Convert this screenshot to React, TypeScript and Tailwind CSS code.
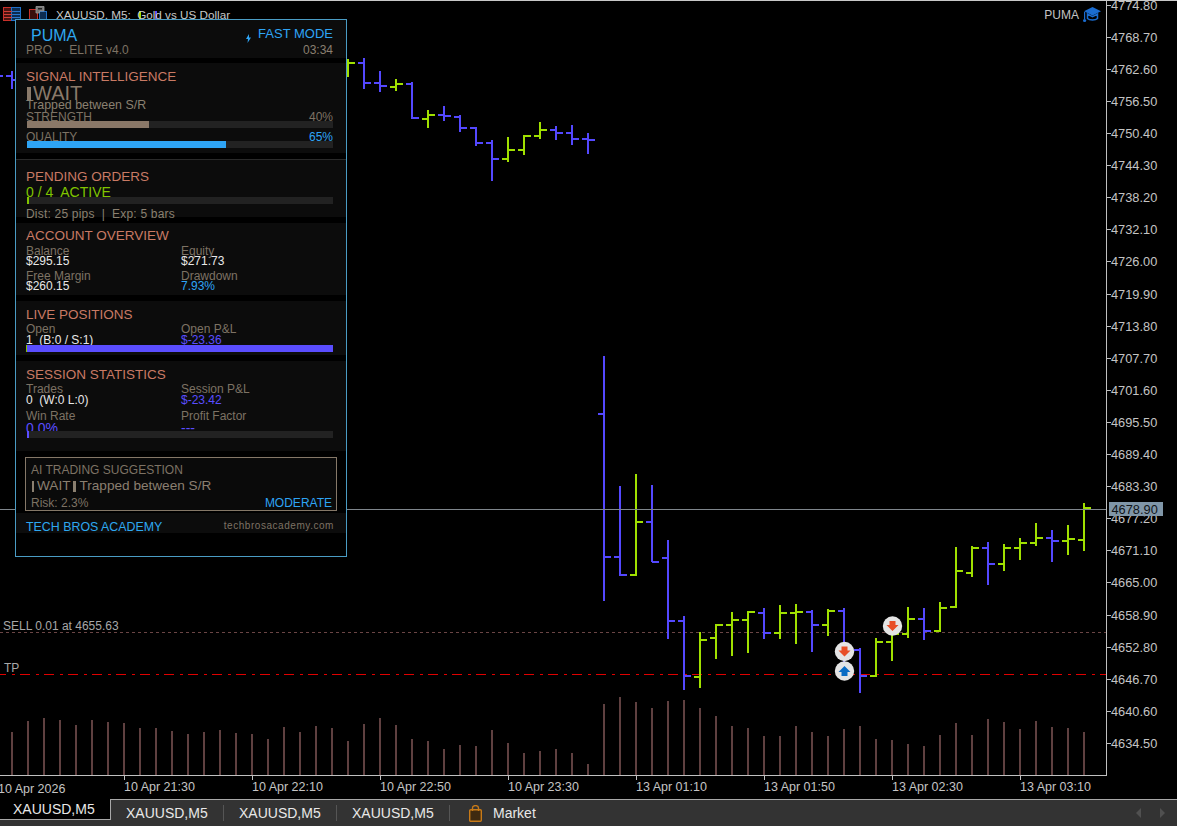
import React from "react";

type Bar = [number, number, number, number, number, "g" | "b"];

const bars: Bar[] = [
  [-4, 70, 90, 70, 76, "b"],
  [12, 71, 89, 76, 80, "b"],
  [140, 11, 40, 30, 30, "g"],
  [156, 11, 40, 30, 30, "b"],
  [348, 59, 77, 70, 63, "g"],
  [364, 58, 89, 63, 83, "b"],
  [380, 71, 92, 83, 86, "b"],
  [396, 79, 91, 87, 84, "g"],
  [412, 82, 119, 84, 118, "b"],
  [428, 110, 128, 119, 115, "g"],
  [444, 106, 121, 115, 116, "b"],
  [460, 115, 132, 117, 128, "b"],
  [476, 127, 146, 128, 143, "b"],
  [492, 140, 181, 143, 159, "b"],
  [508, 137, 162, 159, 150, "g"],
  [524, 135, 155, 150, 136, "g"],
  [540, 122, 139, 136, 130, "g"],
  [556, 126, 140, 130, 133, "b"],
  [572, 125, 145, 133, 139, "b"],
  [588, 133, 154, 139, 140, "b"],
  [604, 356, 601, 414, 557, "b"],
  [620, 486, 576, 557, 575, "b"],
  [636, 474, 576, 575, 522, "g"],
  [652, 485, 562, 522, 562, "b"],
  [668, 540, 639, 558, 621, "b"],
  [684, 616, 690, 621, 676, "b"],
  [700, 632, 688, 677, 640, "g"],
  [716, 624, 659, 638, 625, "g"],
  [732, 612, 656, 625, 620, "g"],
  [748, 611, 653, 620, 612, "g"],
  [764, 608, 639, 613, 633, "b"],
  [780, 605, 639, 633, 613, "g"],
  [796, 604, 644, 613, 612, "g"],
  [812, 610, 652, 612, 625, "b"],
  [828, 609, 636, 625, 611, "g"],
  [844, 608, 664, 611, 650, "b"],
  [860, 648, 693, 650, 676, "b"],
  [876, 638, 677, 676, 642, "g"],
  [892, 630, 661, 642, 634, "g"],
  [908, 607, 638, 634, 619, "g"],
  [924, 608, 640, 619, 631, "b"],
  [940, 602, 632, 631, 608, "g"],
  [956, 547, 608, 607, 571, "g"],
  [972, 546, 577, 573, 548, "g"],
  [988, 542, 585, 548, 564, "b"],
  [1004, 544, 571, 564, 548, "g"],
  [1020, 538, 560, 548, 543, "g"],
  [1036, 523, 546, 543, 538, "g"],
  [1052, 530, 562, 538, 541, "b"],
  [1068, 525, 555, 541, 539, "g"],
  [1084, 503, 551, 540, 508, "g"],
];

const volumes: [number, number][] = [
  [12, 732], [28, 721], [44, 718], [60, 720], [76, 725], [92, 720], [108, 722], [124, 723], [140, 728], [156, 728],
  [172, 731], [188, 734], [204, 732], [220, 730], [236, 733], [252, 734], [268, 739], [284, 727], [300, 732], [316, 726],
  [332, 728], [348, 741], [364, 724], [380, 718], [396, 725], [412, 739], [428, 741], [444, 749], [460, 745], [476, 746],
  [492, 730], [508, 743], [524, 753], [540, 751], [556, 749], [572, 753], [588, 764], [604, 704], [620, 697], [636, 702],
  [652, 708], [668, 701], [684, 700], [700, 708], [716, 716], [732, 726], [748, 728], [764, 736], [780, 736], [796, 726],
  [812, 732], [828, 736], [844, 729], [860, 726], [876, 739], [892, 740], [908, 744], [924, 746], [940, 735], [956, 723],
  [972, 735], [988, 719], [1004, 722], [1020, 729], [1036, 721], [1052, 727], [1068, 728], [1084, 732],
];

const prices: [string, number][] = [
  ["4774.80", 5], ["4768.70", 37], ["4762.60", 69], ["4756.50", 101], ["4750.40", 133], ["4744.30", 165],
  ["4738.20", 197], ["4732.10", 229], ["4726.00", 261], ["4719.90", 294], ["4713.80", 326], ["4707.70", 358],
  ["4701.60", 390], ["4695.50", 422], ["4689.40", 454], ["4683.30", 486], ["4677.20", 518], ["4671.10", 550],
  ["4665.00", 582], ["4658.90", 615], ["4652.80", 647], ["4646.70", 679], ["4640.60", 711], ["4634.50", 743],
];

const times: [string, number][] = [
  ["10 Apr 21:30", 124], ["10 Apr 22:10", 252], ["10 Apr 22:50", 380], ["10 Apr 23:30", 508],
  ["13 Apr 01:10", 636], ["13 Apr 01:50", 764], ["13 Apr 02:30", 892], ["13 Apr 03:10", 1020],
];

function Arrow({ x, y, up }: { x: number; y: number; up?: boolean }) {
  const s = up ? -1 : 1;
  const pts = [[-3, -5], [3, -5], [3, -1], [6, -1], [0, 5], [-6, -1], [-3, -1]]
    .map(([a, b]) => `${x + a},${y + b * s}`)
    .join(" ");
  return (
    <g>
      <circle cx={x} cy={y} r={9.7} fill="#e4e4e4" />
      <polygon points={pts} fill={up ? "#0a6cc4" : "#e84e26"} />
    </g>
  );
}

function Chart() {
  return (
    <svg width={1177} height={798} viewBox="0 1 1177 798" className="block font-['Liberation_Sans',Arial,sans-serif]">
      {volumes.map(([x, y]) => (
        <rect key={x} x={x - 1} y={y} width={2} height={775 - y} fill="#5f4040" shapeRendering="crispEdges" />
      ))}
      <line x1={0} x2={1106} y1={632.5} y2={632.5} stroke="#6a4545" strokeDasharray="3 3" />
      <line x1={0} x2={1106} y1={674.5} y2={674.5} stroke="#e00000" strokeDasharray="10 6 3 5" strokeDashoffset={4} />
      {bars.map(([x, hi, lo, o, c, col]) => {
        const fill = col === "g" ? "#a0e000" : "#5448ff";
        return (
          <g key={x} fill={fill} shapeRendering="crispEdges">
            <rect x={x - 1} y={hi} width={2} height={lo - hi} />
            <rect x={x - 6} y={o - 1} width={6} height={2} />
            <rect x={x} y={c - 1} width={7} height={2} />
          </g>
        );
      })}
      <line x1={0} x2={1106} y1={509.5} y2={509.5} stroke="#7f868c" />
      <Arrow x={844.5} y={651.5} />
      <Arrow x={844.5} y={671} up />
      <Arrow x={892.5} y={626} />
      <rect x={1106} y={0} width={1} height={776} fill="#c0c0c0" />
      <rect x={0} y={775} width={1107} height={1} fill="#c0c0c0" />
      {prices.map(([t, y]) => (
        <g key={t}>
          <rect x={1107} y={y} width={4} height={1} fill="#c0c0c0" />
          <text x={1111} y={y + 5} className="fill-[#c4c4c4] text-[12.8px]">{t}</text>
        </g>
      ))}
      <rect x={1109} y={502} width={54} height={14} fill="#8096a8" />
      <text x={1111.5} y={514} className="fill-[#101418] text-[12.8px]">4678.90</text>
      <text x={-2} y={793} className="fill-[#c4c4c4] text-[12.5px]">10 Apr 2026</text>
      {times.map(([t, x]) => (
        <g key={t}>
          <rect x={x} y={776} width={1} height={4} fill="#c0c0c0" />
          <text x={x} y={791} className="fill-[#c4c4c4] text-[12.5px]">{t}</text>
        </g>
      ))}
      <text x={3} y={630} className="fill-[#a8a8a8] text-[12px]">SELL 0.01 at 4655.63</text>
      <text x={4} y={672} className="fill-[#a8a8a8] text-[12px]">TP</text>
    </svg>
  );
}

const title = "h-[14px] leading-[14px] text-[13.5px] text-[#c97a64]";
const label = "text-[12px] leading-[12px] text-[#7d7264]";
const section = "bg-[#0c0c0c] pl-[10px] pr-[13px]";

function Track({ fill, pct, color, cls = "" }: { fill?: number; pct?: string; color: string; cls?: string }) {
  return (
    <div className={`relative h-[7px] ml-[1px] bg-[#222222] ${cls}`}>
      <div className="h-full" style={{ width: pct ?? `${fill}px`, background: color }} />
    </div>
  );
}

function Cell({ name, value, color, h = "h-[10px]" }: { name: string; value: string; color: string; h?: string }) {
  return (
    <div>
      <div className={`${h} ${label}`}>{name}</div>
      <div className={`${h} text-[12px] leading-[12px]`} style={{ color }}>{value}</div>
    </div>
  );
}

function Panel() {
  return (
    <div className="absolute left-[15px] top-[18px] w-[332px] h-[538px] border border-[#4a9cc4] bg-black font-['Liberation_Sans',Arial,sans-serif]">
      {/* Header */}
      <div className={`${section} h-[38px] pt-[6px]`}>
        <div className="flex justify-between h-[17px]">
          <div className="ml-[5px] text-[16px] leading-[20px] text-[#2ea8f0]">PUMA</div>
          <div className="flex items-start text-[13px] leading-[16px] text-[#2ea4f5]">
            <svg width="5" height="9" viewBox="0 0 5 9" className="mt-[8px] mr-[7px]">
              <polygon points="3,0 0,5 2,5 1.5,9 5,3.5 3,3.5" fill="#2ea4f5" />
            </svg>
            FAST MODE
          </div>
        </div>
        <div className={`flex justify-between h-[14px] text-[12px] leading-[14px] text-[#7d7264]`}>
          <span className="whitespace-pre">PRO  ·  ELITE v4.0</span>
          <span className="text-[#8a7f70]">03:34</span>
        </div>
      </div>

      {/* Signal */}
      <div className={`${section} mt-[5px] h-[90px] pt-[7px]`}>
        <div className={title}>SIGNAL INTELLIGENCE</div>
        <div className="mt-[2px] h-[13px] flex items-start text-[20px] leading-[14px] text-[#8a7a6a]">
          <span className="ml-[1px] mt-[1px] mr-[2px] w-[4px] h-[13px] bg-[#8a7a6a]" />
          WAIT
        </div>
        <div className="h-[12px] text-[12.4px] leading-[12px] text-[#8a8070]">Trapped between S/R</div>
        <div className={`flex justify-between h-[10px] ${label}`}>
          <span>STRENGTH</span>
          <span>40%</span>
        </div>
        <Track fill={122} color="#8a7868" />
        <div className={`mt-[3px] flex justify-between h-[10px] ${label}`}>
          <span>QUALITY</span>
          <span className="text-[#2ea4f5]">65%</span>
        </div>
        <Track fill={199} color="#2ea4f5" />
      </div>

      <div className="mt-[6px] h-px bg-[#2a2a2a]" />

      {/* Pending */}
      <div className={`${section} h-[57px] pt-[10px]`}>
        <div className={title}>PENDING ORDERS</div>
        <div className="mt-[1px] h-[12px] text-[14px] leading-[14px] text-[#80c400] whitespace-pre">0 / 4  ACTIVE</div>
        <Track fill={2} color="#80c400" />
        <div className="mt-[4px] h-[12px] text-[12px] leading-[12px] text-[#8a8070] whitespace-pre tracking-[0.2px]">Dist: 25 pips  |  Exp: 5 bars</div>
      </div>

      {/* Account */}
      <div className={`${section} mt-[6px] h-[72px] pt-[6px]`}>
        <div className={title}>ACCOUNT OVERVIEW</div>
        <div className="mt-[2px] grid grid-cols-[155px_1fr] gap-y-[5px]">
          <Cell name="Balance" value="$295.15" color="#e8e8e8" />
          <Cell name="Equity" value="$271.73" color="#e8e8e8" />
          <Cell name="Free Margin" value="$260.15" color="#e8e8e8" />
          <Cell name="Drawdown" value="7.93%" color="#2ea4f5" />
        </div>
      </div>

      {/* Live */}
      <div className={`${section} mt-[6px] h-[54px] pt-[7px]`}>
        <div className={title}>LIVE POSITIONS</div>
        <div className="mt-[1px] grid grid-cols-[155px_1fr]">
          <div>
            <div className={`h-[11px] ${label}`}>Open</div>
            <div className="h-[11px] text-[12px] leading-[12px] text-[#e8e8e8] whitespace-pre">1  (B:0 / S:1)</div>
          </div>
          <Cell name="Open P&L" value="$-23.36" color="#5a4dff" h="h-[11px]" />
        </div>
        <div className="relative flex h-[7px] bg-[#5a4dff]">
          <div className="w-px h-full bg-[#80c400]" />
        </div>
      </div>

      {/* Session */}
      <div className={`${section} mt-[6px] h-[90px] pt-[7px]`}>
        <div className={title}>SESSION STATISTICS</div>
        <div className="mt-[1px] grid grid-cols-[155px_1fr]">
          <div>
            <div className={`h-[11px] ${label}`}>Trades</div>
            <div className="h-[11px] text-[12px] leading-[12px] text-[#e8e8e8] whitespace-pre">0  (W:0 L:0)</div>
          </div>
          <Cell name="Session P&L" value="$-23.42" color="#5a4dff" h="h-[11px]" />
        </div>
        <div className="mt-[5px] grid grid-cols-[155px_1fr]">
          <div>
            <div className={`h-[11px] ${label}`}>Win Rate</div>
            <div className="h-[10px] text-[14px] leading-[14px] text-[#5a4dff]">0.0%</div>
          </div>
          <div>
            <div className={`h-[11px] ${label}`}>Profit Factor</div>
            <div className="h-[10px] text-[14px] leading-[14px] text-[#5a4dff]">---</div>
          </div>
        </div>
        <Track fill={2} color="#5a4dff" />
      </div>

      {/* AI box */}
      <div className="mt-[6px] ml-[9px] w-[312px] h-[54px] border border-[#857868] bg-[#0a0a0a] pt-[6px] pl-[5px] pr-[4px]">
        <div className={`h-[12px] ${label}`}>AI TRADING SUGGESTION</div>
        <div className="mt-[3px] flex items-center h-[14px] text-[13.6px] leading-[14px] text-[#8a7f70]">
          <span className="ml-[1px] mr-[3px] w-[2px] h-[11px] bg-[#8a7f70]" />
          WAIT
          <span className="mx-[3px] w-[3px] h-[11px] bg-[#8a7f70]" />
          Trapped between S/R
        </div>
        <div className="mt-[4px] flex justify-between h-[12px] text-[12px] leading-[12px]">
          <span className="text-[#7d7264]">Risk: 2.3%</span>
          <span className="text-[#2ea4f5]">MODERATE</span>
        </div>
      </div>

      {/* Footer */}
      <div className="mt-[2px] h-[20px] bg-[#0c0c0c] pl-[10px] pr-[12px] pt-[8px] flex justify-between items-start">
        <span className="text-[12.4px] leading-[12px] text-[#2ea8f0]">TECH BROS ACADEMY</span>
        <span className="text-[10px] leading-[10px] tracking-[0.55px] text-[#7d7264]">techbrosacademy.com</span>
      </div>
    </div>
  );
}

function TopIcons() {
  return (
    <div className="flex gap-[8px]">
      <svg width="18" height="14" viewBox="0 0 18 14" fill="none">
        <rect x="0.5" y="0.5" width="9" height="13" fill="#4a1410" stroke="#c8302a" />
        <rect x="8.5" y="0.5" width="9" height="13" fill="#0c2c50" stroke="#2070c8" />
        <path d="M1 4.5H9M1 7.5H9M1 10.5H9" stroke="#d04038" />
        <path d="M9 4.5H17M9 7.5H17M9 10.5H17" stroke="#2878d0" />
      </svg>
      <svg width="18" height="15" viewBox="0 0 18 15" fill="none" className="-mt-[1px]">
        <rect x="0.5" y="3.5" width="8" height="11" fill="#3a100e" stroke="#c8302a" />
        <rect x="10.5" y="5.5" width="7" height="9" fill="#0c2c50" stroke="#2070c8" />
        <path d="M7 0.5H15V5H10.5V7H7Z" fill="#777" stroke="#999" strokeWidth="0.8" />
        <rect x="9" y="2" width="4" height="1.5" fill="#222" />
      </svg>
    </div>
  );
}

function Tabs() {
  const tab = "w-[113px] flex items-center";
  return (
    <div className="flex h-[27px] bg-[#333333] font-['Liberation_Sans',Arial,sans-serif] text-[14px] text-[#e8e8e8]">
      <div className="w-[111px] h-[21px] shrink-0 bg-black border-r border-b border-[#a8a8a8] pl-[13px] leading-[20px]">XAUUSD,M5</div>
      <div className="flex-1 flex border-t border-[#a8a8a8]">
        {[0, 1, 2].map((i) => (
          <div key={i} className={tab}>
            <span className="ml-[15px] flex-1 leading-[22px]">XAUUSD,M5</span>
            <span className="w-px h-[16px] bg-[#555555]" />
          </div>
        ))}
        <div className="flex items-center ml-[19px]">
          <svg width="13" height="17" viewBox="0 0 13 17" fill="none">
            <rect x="0.7" y="4.7" width="11.6" height="11.6" rx="1" fill="#3f2a10" stroke="#c87a18" strokeWidth="1.4" />
            <path d="M3.5 6V3a3 2.4 0 0 1 6 0V6" stroke="#c87a18" strokeWidth="1.4" />
          </svg>
          <span className="ml-[11px] leading-[22px]">Market</span>
        </div>
        <div className="ml-auto mr-[12px] flex items-center gap-[17px]">
          <svg width="6" height="10" viewBox="0 0 6 10"><polygon points="5,0 5,10 0,5" fill="#505050" /></svg>
          <svg width="6" height="10" viewBox="0 0 6 10"><polygon points="1,0 1,10 6,5" fill="#505050" /></svg>
        </div>
      </div>
    </div>
  );
}

export default function App() {
  return (
    <div className="w-[1177px] h-[826px] flex flex-col bg-black overflow-hidden">
      <div className="h-px bg-[#c8c8c8]" />
      <div className="relative flex-1">
        <Chart />
        <div className="absolute left-[3px] top-[6px]"><TopIcons /></div>
        <div className="absolute left-[56px] top-[7px] whitespace-pre text-[11.7px] leading-[14px] text-[#c8c8c8] font-['Liberation_Sans',Arial,sans-serif]">XAUUSD, M5:  Gold vs US Dollar</div>
        <div className="absolute right-[75px] top-[5px] flex items-center gap-[4px] font-['Liberation_Sans',Arial,sans-serif] text-[12px] leading-[16px] text-[#c4c4c4]">
          PUMA
          <svg width="19" height="17" viewBox="0 0 19 17" fill="none">
            <path d="M9.5 1L18 5.2L9.5 9.4L1 5.2Z" fill="#1a6cd0" />
            <path d="M4.5 8V12.5C6.5 14.6 12.5 14.6 14.5 12.5V8L9.5 10.6Z" stroke="#1a6cd0" strokeWidth="1.5" />
            <path d="M1.6 6V13" stroke="#1a6cd0" strokeWidth="1.2" />
            <circle cx="1.6" cy="14.5" r="1.6" fill="#1a6cd0" />
          </svg>
        </div>
        <Panel />
      </div>
      <Tabs />
    </div>
  );
}
